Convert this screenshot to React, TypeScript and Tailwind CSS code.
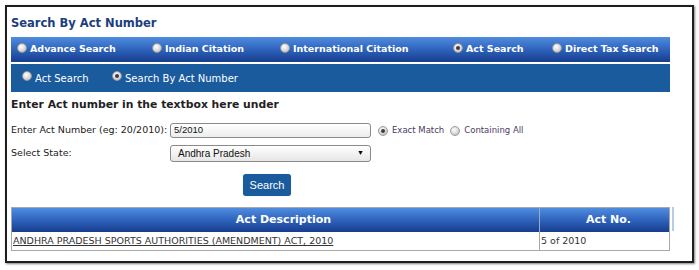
import React from 'react';

const Radio = ({ checked = false, className = '' }: { checked?: boolean; className?: string }) => (
  <span
    className={`relative inline-block w-[10px] h-[10px] rounded-full shrink-0 bg-[radial-gradient(circle_at_40%_35%,#ffffff,#d4d4d4_60%,#a9a9a9)] border border-[#9a9a9a] ${className}`}
  >
    {checked && (
      <span className="absolute left-[2px] top-[2px] w-[4px] h-[4px] rounded-full bg-[#3c3c3c]" />
    )}
  </span>
);

const topTabs = [
  { label: 'Advance Search', w: 'w-[135px]' },
  { label: 'Indian Citation', w: 'w-[128px]' },
  { label: 'International Citation', w: 'w-[173px]' },
  { label: 'Act Search', w: 'w-[99px]', checked: true },
  { label: 'Direct Tax Search', w: 'w-[110px]' },
];

export default function App() {
  return (
    <div className="w-[699px] h-[270px] bg-white p-[5px] font-['DejaVu_Sans',Verdana,sans-serif]">
      <div className="h-[258px] w-[689px] border-2 border-[#1e1e1e] shadow-[1px_1px_2px_rgba(0,0,0,0.5)] pl-[4px] pt-[9px]">
        {/* Title */}
        <h1 className="text-[11.5px] leading-[15px] font-bold text-[#1c3d7e]">Search By Act Number</h1>

        {/* Main tabs */}
        <div className="mt-[6px] w-[659px] h-[25px] flex items-center pl-[6px] bg-[linear-gradient(#4f8de0,#2c5fb8_55%,#173d8c)]">
          {topTabs.map((t) => (
            <div key={t.label} className={`${t.w} flex items-center gap-[3px]`}>
              <Radio checked={t.checked} className="-mt-[4px]" />
              <span className="text-[9.5px] font-bold text-white whitespace-nowrap">{t.label}</span>
            </div>
          ))}
        </div>

        {/* Sub tabs */}
        <div className="mt-[2px] w-[659px] h-[28px] flex items-center pl-[11px] bg-[#1a5b9e]">
          <div className="w-[90px] flex items-center gap-[3px]">
            <Radio className="-mt-[4px]" />
            <span className="text-[10px] text-white whitespace-nowrap">Act Search</span>
          </div>
          <div className="flex items-center gap-[3px]">
            <Radio checked className="-mt-[4px]" />
            <span className="text-[10px] text-white whitespace-nowrap">Search By Act Number</span>
          </div>
        </div>

        <h2 className="mt-[6px] text-[10.8px] leading-[14px] font-bold text-[#222]">
          Enter Act number in the textbox here under
        </h2>

        {/* Act number row */}
        <div className="mt-[11px] flex items-center h-[15px]">
          <span className="w-[159px] text-[9.5px] text-[#222] whitespace-nowrap">Enter Act Number (eg: 20/2010):</span>
          <div className="w-[201px] h-[15px] rounded-[3px] border border-[#8a8a8a] bg-[linear-gradient(#ffffff,#ededed)] flex items-center pl-[3px] text-[9.5px] text-[#111] font-['Liberation_Sans',Arial,sans-serif]">
            5/2010
          </div>
          <Radio checked className="ml-[7px]" />
          <span className="ml-[4px] text-[8.5px] text-[#4b3a63]">Exact Match</span>
          <Radio className="ml-[6px]" />
          <span className="ml-[4px] text-[8.5px] text-[#4b3a63]">Containing All</span>
        </div>

        {/* State row */}
        <div className="mt-[7px] flex items-center h-[17px]">
          <span className="w-[159px] text-[9.5px] text-[#222]">Select State:</span>
          <div className="w-[201px] h-[17px] rounded-[3px] border border-[#8a8a8a] bg-[linear-gradient(#ffffff,#e6e6e6)] flex items-center justify-between pl-[7px] pr-[6px] text-[10px] text-[#111] font-['Liberation_Sans',Arial,sans-serif]">
            <span>Andhra Pradesh</span>
            <span className="text-[7px] text-black">▼</span>
          </div>
        </div>

        {/* Search button */}
        <div className="mt-[10px] pl-[232px]">
          <button className="w-[48px] h-[22px] rounded-[3px] bg-[#1a5b9e] text-white text-[11px] font-['Liberation_Sans',Arial,sans-serif] shadow-[0_0_1px_rgba(0,0,0,0.3)]">
            Search
          </button>
        </div>

        {/* Results table */}
        <div className="mt-[11px] flex">
          <div className="w-[659px] border border-[#a8a8a8]">
            <div className="flex h-[24px] bg-[linear-gradient(#4f8de0,#2c5fb8_55%,#173d8c)] text-white text-[11px] font-bold">
              <div className="w-[528px] flex items-center justify-center pl-[16px] border-r border-[#9aa8c0]">Act Description</div>
              <div className="flex-1 flex items-center justify-center pl-[8px]">Act No.</div>
            </div>
            <div className="flex h-[18px] text-[9.5px] text-[#333]">
              <div className="w-[528px] flex items-center pl-[1px] border-r border-[#a8a8a8]">
                <span className="underline">ANDHRA PRADESH SPORTS AUTHORITIES (AMENDMENT) ACT, 2010</span>
              </div>
              <div className="flex-1 flex items-center pl-[1px]">5 of 2010</div>
            </div>
          </div>
          <div className="ml-[2px] w-[2px] h-[24px] bg-[#b9cbe6]" />
        </div>
      </div>
    </div>
  );
}
